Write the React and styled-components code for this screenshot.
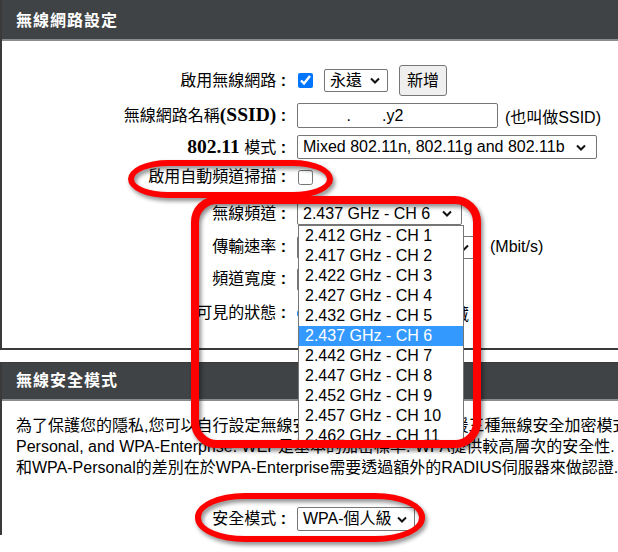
import React from 'react'
import styled, { createGlobalStyle } from 'styled-components'

const sans = `"Liberation Sans", "Noto Sans CJK TC", sans-serif`
const serif = `"Liberation Serif", "Noto Sans CJK TC", serif`

const GlobalStyle = createGlobalStyle`
  html, body {
    margin: 0;
    padding: 0;
    background: #fff;
    overflow: hidden;
  }
  body {
    font-family: ${sans};
    font-size: 16px;
    color: #000;
  }
`

const Page = styled.div`
  position: relative;
  width: 760px;
  height: 552px;
`

const Panel = styled.section`
  border-left: 2px solid #3a3a3a;
  border-bottom: ${p => (p.$open ? 'none' : '2px solid #3a3a3a')};
  border-top: ${p => (p.$open ? '1px solid #3a3a3a' : 'none')};
  margin-bottom: ${p => p.$gap || 0}px;
`

const PanelTitle = styled.h2`
  margin: 0;
  box-sizing: border-box;
  height: ${p => p.$h}px;
  padding: ${p => p.$pt || 0}px 0 0 14px;
  display: flex;
  align-items: center;
  background: #404345;
  border-bottom: 2px solid #8c8c8c;
  color: #fff;
  font: bold 16px/1 ${sans};
  letter-spacing: 1px;
`

const Form = styled.div`
  padding: ${p => p.$pt}px 0 ${p => p.$pb}px;
`

const Row = styled.div`
  display: flex;
  align-items: center;
  gap: 11px;
  height: ${p => p.$h}px;
  margin-top: ${p => p.$mt || 0}px;
  white-space: nowrap;
`

const Label = styled.div`
  flex: none;
  width: 284px;
  text-align: right;
  font-size: 16px;
  line-height: 20px;
`

const Colon = styled.b`
  font-family: ${sans};
`

const Latin = styled.b`
  font-family: ${serif};
  font-size: 19.5px;
`

const Controls = styled.div`
  display: flex;
  align-items: center;
  gap: ${p => p.$gap ?? 11}px;
`

const Check = styled.input.attrs({ type: 'checkbox', readOnly: true })`
  width: 15px;
  height: 15px;
  margin: 0 0 0 1px;
  accent-color: #0075ff;
`

const Radio = styled.input.attrs({ type: 'radio', readOnly: true })`
  width: 13px;
  height: 13px;
  margin: 0 ${p => p.$mr || 4}px 0 ${p => p.$ml || 0}px;
  accent-color: #0075ff;
`

const SelectWrap = styled.div`
  position: relative;
  z-index: ${p => (p.$open ? 2 : 'auto')};
`

const SelectBox = styled.div`
  box-sizing: border-box;
  display: flex;
  align-items: center;
  justify-content: space-between;
  width: ${p => p.$w}px;
  height: ${p => p.$h || 23}px;
  padding: 0 ${p => p.$pr || 8}px 0 5px;
  border: 1px solid #767676;
  border-radius: 2px;
  background: #fff;
  font: 16px/1 ${sans};
`

const ChevronSvg = styled.svg`
  flex: none;
  width: 10px;
  height: 7px;
`

const Chevron = () => (
  <ChevronSvg viewBox='0 0 10 7'>
    <polyline points='1,1.5 5,5.5 9,1.5' fill='none' stroke='#111' strokeWidth='2' />
  </ChevronSvg>
)

const Select = ({ w, h, pr, value, children }) => (
  <SelectWrap $open={!!children}>
    <SelectBox $w={w} $h={h} $pr={pr}>
      <span>{value}</span>
      <Chevron />
    </SelectBox>
    {children}
  </SelectWrap>
)

const OptionList = styled.ul`
  position: absolute;
  top: 100%;
  left: 1px;
  width: 166px;
  height: 223px;
  box-sizing: border-box;
  margin: 0;
  padding: 0;
  list-style: none;
  overflow: hidden;
  background: #fff;
  border: 1px solid #767676;
  border-bottom: none;
`

const Option = styled.li`
  height: 20px;
  padding-left: 6px;
  font: 16px/20px ${sans};
  background: ${p => (p.$active ? '#3399ff' : '#fff')};
  color: ${p => (p.$active ? '#fff' : '#000')};
`

const Button = styled.button`
  box-sizing: border-box;
  width: 48px;
  height: 31px;
  padding: 0;
  border: 1px solid #767676;
  border-radius: 3px;
  background: #efefef;
  color: #000;
  font: 16px/1 ${sans};
`

const TextInput = styled.input.attrs({ type: 'text', readOnly: true })`
  box-sizing: border-box;
  width: ${p => p.$w}px;
  height: 25px;
  margin: 0;
  padding: 0 4px;
  border: 1px solid #767676;
  border-radius: 2px;
  font: 16px ${sans};
  color: #000;
  white-space: pre;
`

const Note = styled.span`
  margin-left: ${p => p.$ml || 0}px;
  font-size: 16px;
`

const Paragraph = styled.p`
  margin: 14px 0 0 14px;
  font-size: 16px;
  line-height: 21px;
  white-space: nowrap;
`

const Callout = styled.div`
  position: absolute;
  z-index: 3;
  box-sizing: border-box;
  left: ${p => p.$x}px;
  top: ${p => p.$y}px;
  width: ${p => p.$w}px;
  height: ${p => p.$h}px;
  border: ${p => p.$stroke}px solid #ff0000;
  border-radius: ${p => p.$r};
  filter: drop-shadow(2px 3px 2px rgba(0, 0, 0, 0.45));
  pointer-events: none;
`

const channels = [
  '2.412', '2.417', '2.422', '2.427', '2.432', '2.437',
  '2.442', '2.447', '2.452', '2.457', '2.462', '2.467', '2.472'
]

const FieldLabel = ({ children }) => (
  <Label>
    {children}
    <Colon> :</Colon>
  </Label>
)

export default function App () {
  return (
    <>
      <GlobalStyle />
      <Page>
        <Panel $gap={12}>
          <PanelTitle $h={41} $pt={2}>無線網路設定</PanelTitle>
          <Form $pt={22} $pb={20}>
            <Row $h={35}>
              <FieldLabel>啟用無線網路</FieldLabel>
              <Controls>
                <Check defaultChecked />
                <Select w={64} value='永遠' pr={7} />
                <Button>新增</Button>
              </Controls>
            </Row>
            <Row $h={35}>
              <FieldLabel>無線網路名稱<Latin>(SSID)</Latin></FieldLabel>
              <Controls $gap={7}>
                <TextInput $w={201} defaultValue={'          .       .y2'} />
                <Note>(也叫做SSID)</Note>
              </Controls>
            </Row>
            <Row $h={28}>
              <FieldLabel><Latin>802.11</Latin> 模式</FieldLabel>
              <Select w={300} h={24} value='Mixed 802.11n, 802.11g and 802.11b' pr={10} />
            </Row>
            <Row $h={32}>
              <FieldLabel>啟用自動頻道掃描 </FieldLabel>
              <Check />
            </Row>
            <Row $h={41}>
              <FieldLabel>無線頻道</FieldLabel>
              <Select w={165} value='2.437 GHz - CH 6' pr={9}>
                <OptionList>
                  {channels.map((f, i) => (
                    <Option key={f} $active={i === 5}>
                      {f} GHz - CH {i + 1}
                    </Option>
                  ))}
                </OptionList>
              </Select>
            </Row>
            <Row $h={26}>
              <FieldLabel>傳輸速率</FieldLabel>
              <Controls>
                <Select w={182} value='最佳 (自動)' pr={9} />
                <Note>(Mbit/s)</Note>
              </Controls>
            </Row>
            <Row $h={38}>
              <FieldLabel>頻道寬度</FieldLabel>
              <Select w={140} value='20 MHz' />
            </Row>
            <Row $h={30}>
              <FieldLabel>可見的狀態 </FieldLabel>
              <Controls $gap={0}>
                <Radio name='vis' defaultChecked />
                <span>可見</span>
                <Radio name='vis' $ml={74} />
                <span>隱藏</span>
              </Controls>
            </Row>
          </Form>
        </Panel>

        <Panel $open>
          <PanelTitle $h={38}>無線安全模式</PanelTitle>
          <Paragraph>
            為了保護您的隱私,您可以自行設定無線安全的功能。此裝置支援三種無線安全加密模式,包括: WEP, WPA-<br />
            Personal, and WPA-Enterprise. WEP是基本的加密標準. WPA提供較高層次的安全性.<br />
            和WPA-Personal的差別在於WPA-Enterprise需要透過額外的RADIUS伺服器來做認證.
          </Paragraph>
          <Row $h={32} $mt={25}>
            <FieldLabel>安全模式</FieldLabel>
            <Select w={118} h={24} value='WPA-個人級' pr={7} />
          </Row>
        </Panel>

        <Callout $x={128} $y={160} $w={205} $h={38} $stroke={6} $r='40px / 19px' />
        <Callout $x={191} $y={196} $w={290} $h={252} $stroke={8} $r='26px' />
        <Callout $x={195} $y={493} $w={230} $h={49} $stroke={6} $r='50px / 24px' />
      </Page>
    </>
  )
}
